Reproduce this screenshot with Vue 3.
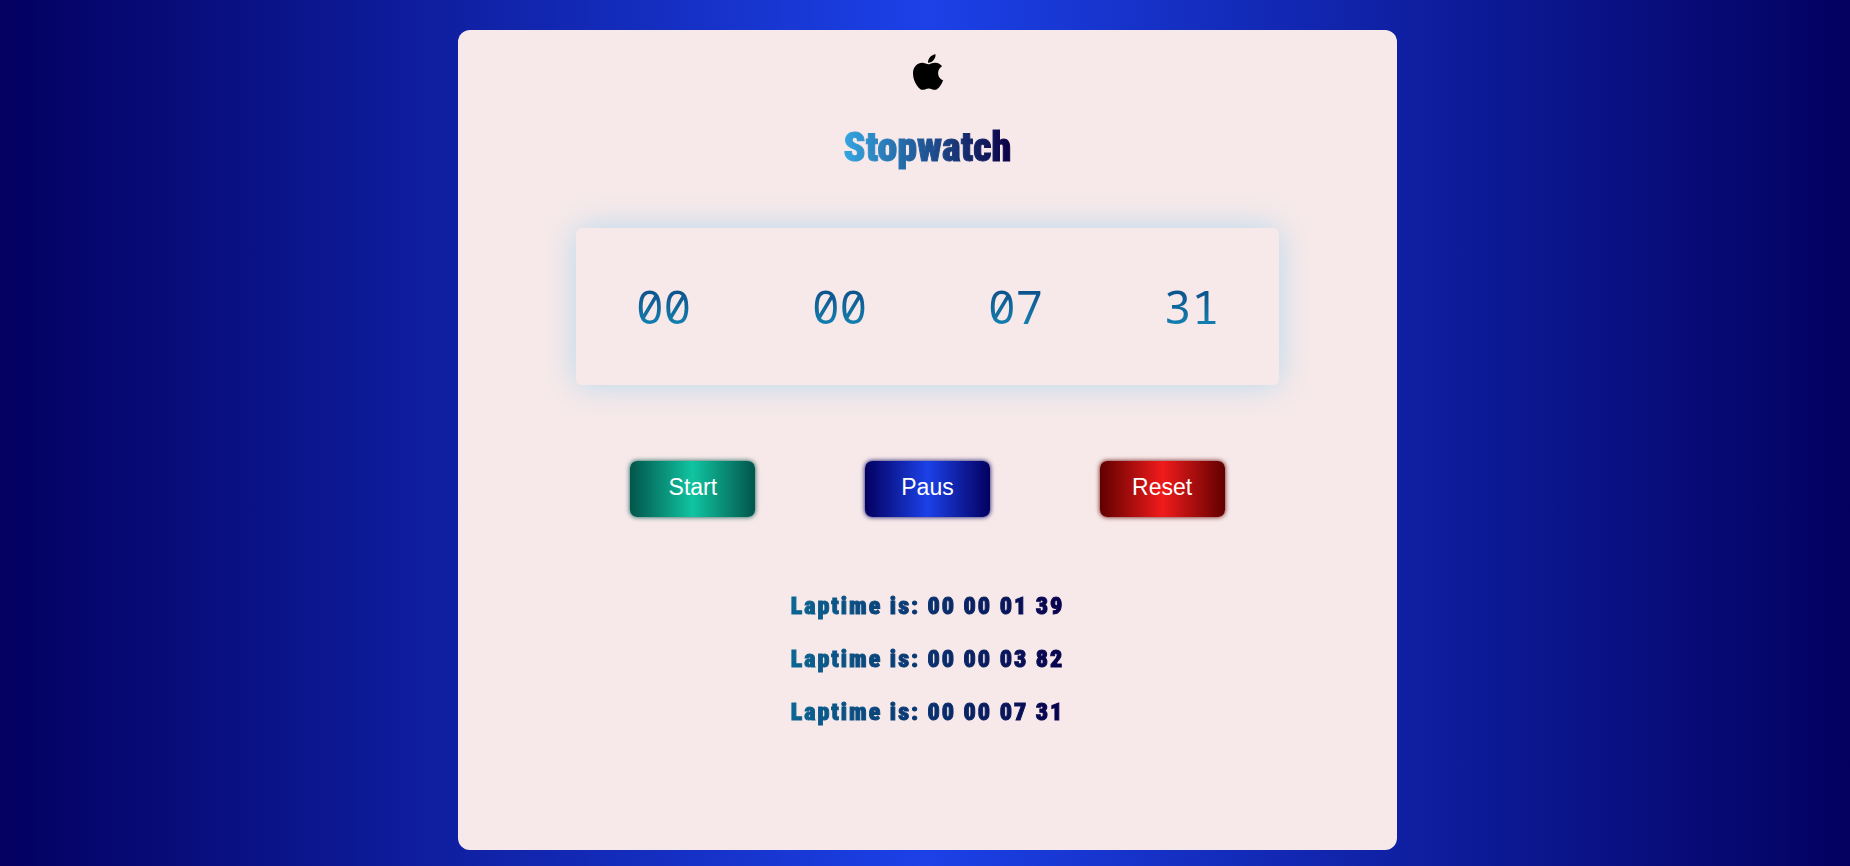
<script setup>
import { ref } from 'vue'

const time = ref([
  { unit: 'hours', value: '00' },
  { unit: 'minutes', value: '00' },
  { unit: 'seconds', value: '07' },
  { unit: 'hundredths', value: '31' },
])
const laps = ref(['00 00 01 39', '00 00 03 82', '00 00 07 31'])
const actions = [
  { label: 'Start', kind: 'start' },
  { label: 'Paus', kind: 'pause' },
  { label: 'Reset', kind: 'reset' },
]
</script>

<template>
  <div class="page">
    <main class="card">
      <svg class="logo" viewBox="4 32 376 448" aria-hidden="true">
        <path d="M318.7 268.7c-.2-36.7 16.4-64.4 50-84.8-18.8-26.9-47.2-41.7-84.7-44.6-35.5-2.8-74.3 20.7-88.5 20.7-15 0-49.4-19.7-76.4-19.7C63.3 141.2 4 184.8 4 273.5q0 39.3 14.4 81.2c12.8 36.7 59 126.7 107.2 125.2 25.2-.6 43-17.9 75.8-17.9 31.8 0 48.3 17.9 76.4 17.9 48.6-.7 90.4-82.5 102.6-119.3-65.2-30.7-61.7-90-61.7-91.9zm-56.6-164.2c27.3-32.4 24.8-61.9 24-72.5-24.1 1.4-52 16.4-67.9 34.9-17.5 19.8-27.8 44.3-25.6 71.9 26.1 2 49.9-11.4 69.5-34.2z" />
      </svg>
      <h1 class="title">Stopwatch</h1>
      <section class="display">
        <span v-for="part in time" :key="part.unit" class="digits">{{ part.value }}</span>
      </section>
      <div class="actions">
        <button v-for="a in actions" :key="a.kind" type="button" class="btn" :class="a.kind">{{ a.label }}</button>
      </div>
      <ol class="laps">
        <li v-for="lap in laps" :key="lap" class="lap">Laptime is: {{ lap }}</li>
      </ol>
    </main>
  </div>
</template>

<style>
body {
  margin: 0;
}
</style>

<style scoped>
.page {
  box-sizing: border-box;
  min-height: 100vh;
  padding: 30px 0 16px 5px;
  display: flex;
  justify-content: center;
  background: linear-gradient(90deg, #030060, #1c41e8, #030060);
}
.card {
  box-sizing: border-box;
  width: calc(50% + 16px);
  padding: 24px 0;
  display: flex;
  flex-direction: column;
  align-items: center;
  border-radius: 12px;
  background: #f7e9e9;
}
.logo {
  width: 30px;
  height: 36px;
  flex: none;
}
.title {
  margin: 34px 0 0;
  font: 900 40px/48px Impact, "Roboto Condensed", Roboto, sans-serif;
  color: transparent;
  background: linear-gradient(90deg, #34a5df, #0b0045);
  background-clip: text;
  -webkit-text-stroke: 1px transparent;
}
.display {
  width: 75%;
  margin-top: 56px;
  padding: 48px 0;
  display: grid;
  grid-template-columns: repeat(4, 1fr);
  justify-items: center;
  border-radius: 6px;
  box-shadow: 0 0 32px #b5d9ee;
  background: #f7e9e9;
}
.digits {
  font: 46px/61px Consolas, "Noto Sans Mono", "DejaVu Sans Mono", monospace;
  color: transparent;
  background: linear-gradient(#0b3f7c, #1590bd);
  background-clip: text;
}
.actions {
  width: 75%;
  margin-top: 76px;
  display: flex;
  justify-content: space-around;
}
.btn {
  width: 125px;
  height: 56px;
  padding: 0 0 4px;
  border: none;
  border-radius: 7px;
  color: #fff;
  font: 23px/28px "Liberation Sans", Arial, sans-serif;
  cursor: pointer;
}
.start {
  background: linear-gradient(90deg, #02554b, #10c4a1, #02554b);
  box-shadow: 0 0 5px #02554b;
}
.pause {
  background: linear-gradient(90deg, #030060, #1c41e8, #030060);
  box-shadow: 0 0 5px #030060;
}
.reset {
  background: linear-gradient(90deg, #610000, #f01b1b, #610000);
  box-shadow: 0 0 5px #610000;
}
.laps {
  margin: 63px 0 0;
  padding: 0;
  display: grid;
  list-style: none;
}
.lap {
  font: 900 24px/53px Impact, "Roboto Condensed", Roboto, sans-serif;
  letter-spacing: 2px;
  color: transparent;
  background: linear-gradient(90deg, #0b6592, #08004c);
  background-clip: text;
  -webkit-text-stroke: 1px transparent;
}
</style>
